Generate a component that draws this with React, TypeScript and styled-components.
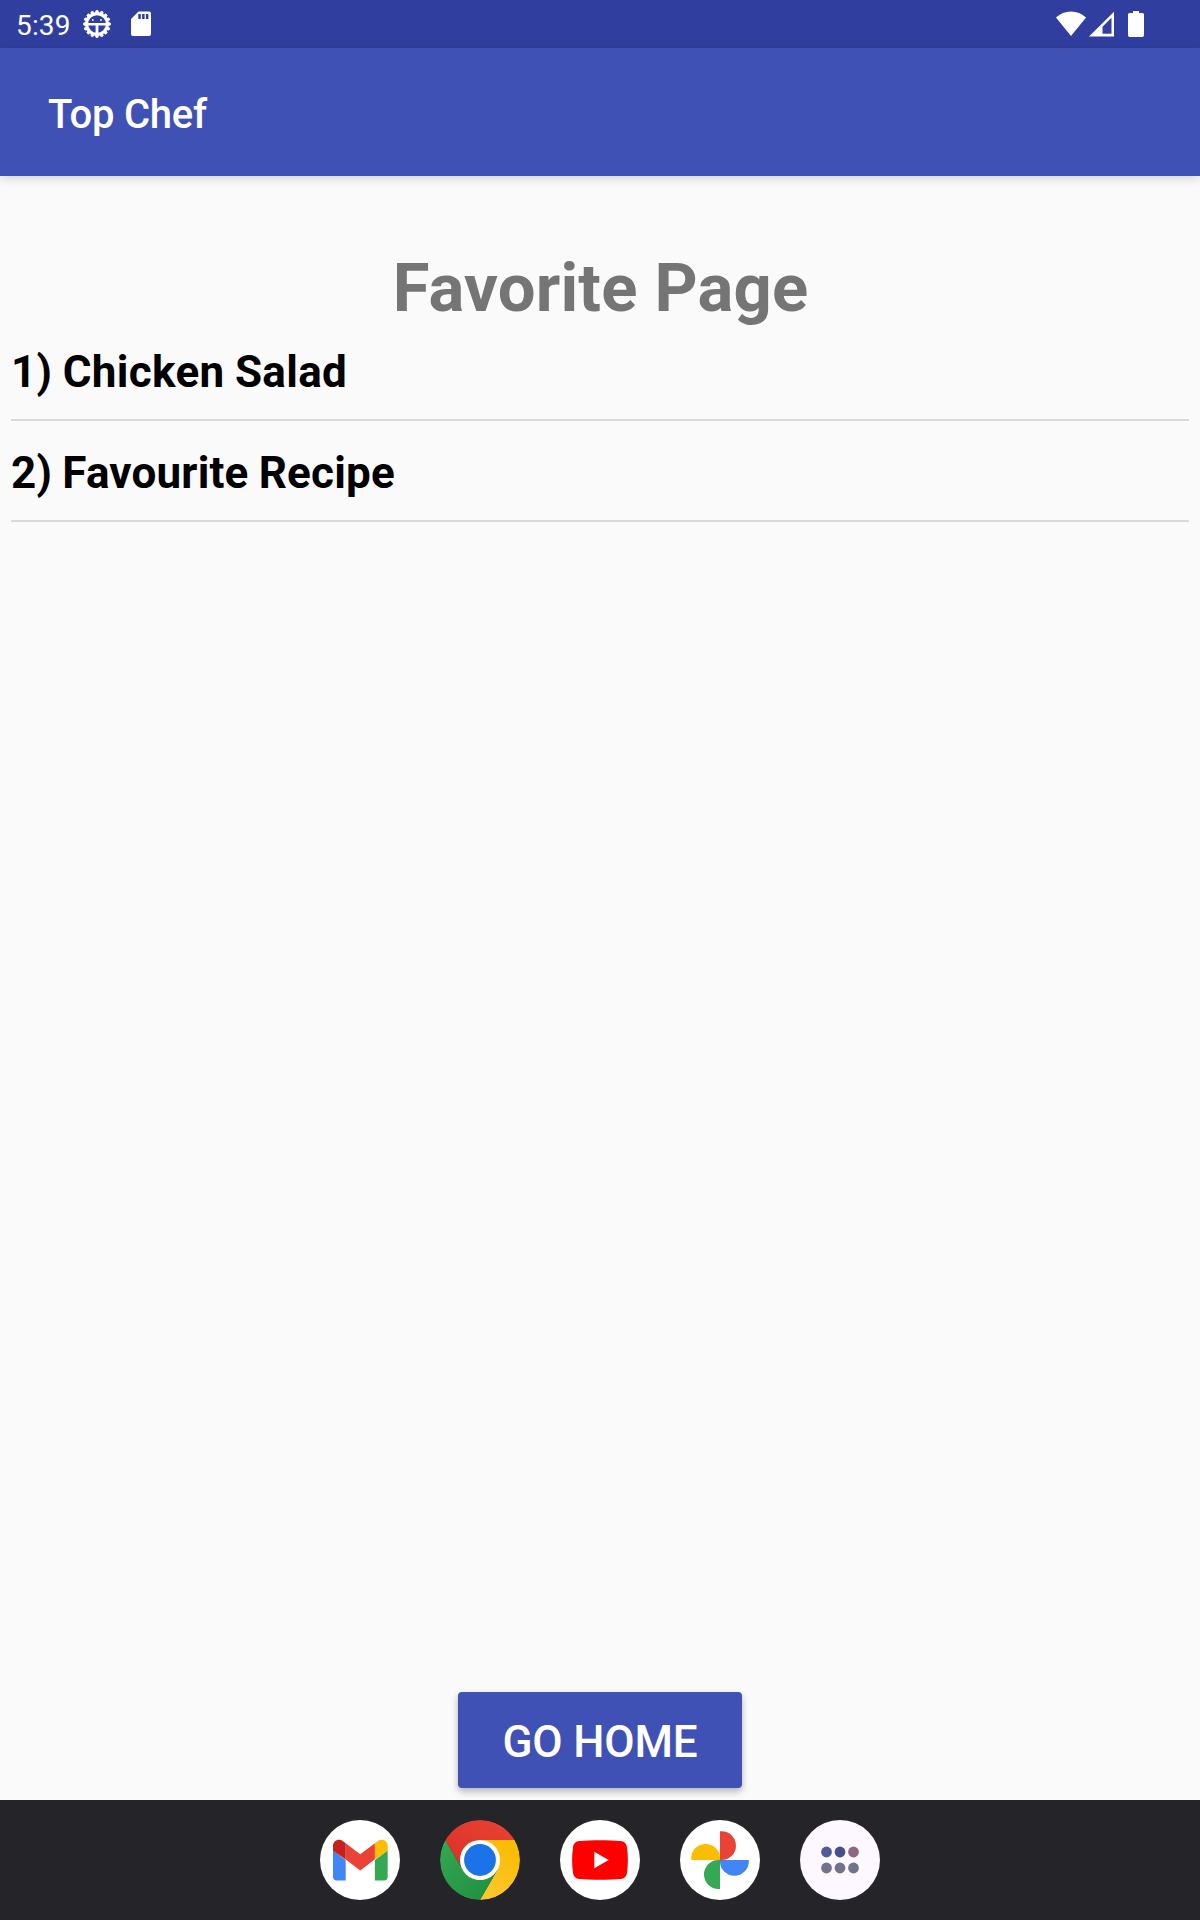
import React from "react";
import styled, { createGlobalStyle } from "styled-components";

const GlobalStyle = createGlobalStyle`
  * { box-sizing: border-box; }
  body {
    margin: 0;
    background: #fafafa;
    font-family: Roboto, "Liberation Sans", sans-serif;
  }
`;

const Screen = styled.div`
  display: flex;
  flex-direction: column;
  width: 1200px;
  height: 1920px;
  overflow: hidden;
  background: #fafafa;
`;

const StatusBar = styled.div`
  display: flex;
  justify-content: space-between;
  flex: none;
  height: 48px;
  padding: 0 50px 0 16px;
  background: #303f9f;
  color: #fff;
`;

const StatusGroup = styled.div<{ $gap?: number }>`
  display: flex;
  align-items: center;
  gap: ${(p) => p.$gap ?? 0}px;
`;

const Clock = styled.span`
  width: 67px;
  padding-top: 3px;
  font-size: 28px;
  letter-spacing: 0.15px;
  line-height: 45px;
`;

const BatterySlot = styled.div`
  padding: 0 6px 0 14.5px;
`;

const Glyph = styled.svg`
  display: block;
  flex: none;
`;

const AppBar = styled.header`
  display: flex;
  align-items: center;
  flex: none;
  height: 128px;
  padding: 6px 48px 0;
  background: #3f51b5;
  box-shadow: 0 2px 10px rgba(0, 0, 0, 0.17);
`;

const AppTitle = styled.h1`
  margin: 0;
  color: #fff;
  font-size: 40px;
  font-weight: 500;
  letter-spacing: -0.22px;
  line-height: 48px;
`;

const Content = styled.main`
  display: flex;
  flex-direction: column;
  flex: 1;
  min-height: 0;
  padding: 73px 11px 12px;
`;

const PageTitle = styled.h2`
  margin: 0;
  padding-left: 1px;
  color: #757575;
  font-size: 67px;
  font-weight: 700;
  letter-spacing: 0.18px;
  line-height: 79px;
  text-align: center;
`;

const RecipeList = styled.ul`
  flex: 1;
  margin: 0;
  padding: 0;
  list-style: none;
`;

const RecipeItem = styled.li<{ $first?: boolean }>`
  height: ${(p) => (p.$first ? 93 : 101)}px;
  padding-top: ${(p) => (p.$first ? 18 : 26)}px;
  border-bottom: 2px solid #dadada;
  color: #000;
  font-size: 44px;
  font-weight: 700;
  letter-spacing: ${(p) => (p.$first ? 0.33 : 0.19)}px;
  word-spacing: -0.9px;
  line-height: 52px;
`;

const HomeButton = styled.button`
  align-self: center;
  width: 284px;
  height: 96px;
  padding: 4px 0 0;
  border: 0;
  border-radius: 4px;
  background: #3f51b5;
  box-shadow: 0 4px 7px rgba(0, 0, 0, 0.24), 0 1px 6px rgba(0, 0, 0, 0.06);
  color: #fff;
  font-family: inherit;
  font-size: 44px;
  font-weight: 500;
  letter-spacing: -0.15px;
  line-height: 52px;
`;

const Taskbar = styled.nav`
  display: flex;
  align-items: center;
  justify-content: center;
  gap: 40px;
  flex: none;
  height: 120px;
  background: #252529;
`;

const AppIcon = styled.div<{ $bg?: string }>`
  display: flex;
  width: 80px;
  height: 80px;
  border-radius: 50%;
  overflow: hidden;
  background: ${(p) => p.$bg ?? "#fff"};
`;

const teeth = Array.from({ length: 16 }, (_, i) => i * 22.5);

function GearIcon() {
  return (
    <Glyph width="28" height="28" viewBox="0 0 28 28">
      <circle cx="14" cy="14" r="10.3" fill="none" stroke="#fff" strokeWidth="2.900" />
      {teeth.map((a) => (
        <path key={a} d="M12.300 3.200 13 .6h2l.7 2.600z" fill="#fff" stroke="#fff" strokeWidth=".8" strokeLinejoin="round" transform={`rotate(${a} 14 14)`} />
      ))}
      <path d="M4 13h20v2.400H15.400V24h-2.800v-8.600H4z" fill="#fff" />
      <circle cx="9.800" cy="10" r=".9" fill="#fff" />
      <circle cx="18" cy="10" r=".9" fill="#fff" />
    </Glyph>
  );
}

function SdCardIcon() {
  return (
    <Glyph width="20" height="26" viewBox="0 0 20 26">
      <path fillRule="evenodd" fill="#fff" d="M7.5.5H18a2 2 0 0 1 2 2V23a2 2 0 0 1-2 2H2a2 2 0 0 1-2-2V8zM7.3 3v5h2.5V3zm3.8 0v5h2.5V3zm3.8 0v5h2.5V3z" />
    </Glyph>
  );
}

function WifiIcon() {
  return (
    <Glyph width="30" height="26" viewBox="0 0 30 26">
      <path d="M15 25 0 6.5C4 2.5 9.500 .5 15 .5s11 2 15 6z" fill="#fff" />
    </Glyph>
  );
}

function SignalIcon() {
  return (
    <Glyph width="25" height="26" viewBox="0 0 25 26">
      <path fillRule="evenodd" d="M0 25.500 25 .7V25.500zM13.500 15.700V22.800H22.500V6.800z" fill="#fff" />
    </Glyph>
  );
}

function BatteryIcon() {
  return (
    <Glyph width="16" height="26" viewBox="0 0 16 26">
      <path d="M5 0h6v2h3.500A1.500 1.500 0 0 1 16 3.500v20.800a1.700 1.700 0 0 1-1.700 1.700H1.700A1.700 1.700 0 0 1 0 24.300v-20.800A1.500 1.500 0 0 1 1.500 2H5z" fill="#fff" />
    </Glyph>
  );
}

function GmailIcon() {
  return (
    <Glyph width="80" height="80" viewBox="0.300 0 80 80">
      <path d="M13.300 30.500 26 40v20.500h-9a3.700 3.700 0 0 1-3.700-3.700z" fill="#4285f4" />
      <path d="M55.200 40 68 30.500v26.300a3.700 3.700 0 0 1-3.700 3.700h-9.100z" fill="#34a853" />
      <path d="M26 23.300 40.600 34.300 55.200 23.300V39.200L40.600 50.400 26 39.400z" fill="#ea4335" />
      <path d="M13.300 30.800V26c0-5.500 5.800-8.100 10-4.800l2.700 2.100v16.100z" fill="#c5221f" />
      <path d="M55.200 39.400V23.300l2.800-2.100c4.200-3.300 10-.7 10 4.800v4.800z" fill="#fbbc04" />
    </Glyph>
  );
}

function ChromeIcon() {
  return (
    <Glyph width="80" height="80" viewBox="0 0 80 80">
      <defs>
        <linearGradient id="chromeRed" x1="0" y1="1" x2="1" y2="0">
          <stop offset="0" stopColor="#d93025" />
          <stop offset="1" stopColor="#ea4335" />
        </linearGradient>
        <linearGradient id="chromeYellow" x1="0" y1="1" x2=".5" y2="0">
          <stop offset="0" stopColor="#fcc934" />
          <stop offset="1" stopColor="#fbbc04" />
        </linearGradient>
        <linearGradient id="chromeGreen" x1="1" y1="1" x2="0" y2="0">
          <stop offset="0" stopColor="#1e8e3e" />
          <stop offset="1" stopColor="#34a853" />
        </linearGradient>
      </defs>
      <path d="M40 20H74.640A40 40 0 0 0 5.360 20L22.680 50L40 40z" fill="url(#chromeRed)" />
      <path d="M57.320 50 40 80A40 40 0 0 0 74.640 20H40V40z" fill="url(#chromeYellow)" />
      <path d="M22.680 50 5.360 20A40 40 0 0 0 40 80L57.320 50 40 40z" fill="url(#chromeGreen)" />
      <circle cx="40" cy="40" r="20" fill="#fff" />
      <circle cx="40" cy="40" r="15.900" fill="#1a73e8" />
    </Glyph>
  );
}

function YouTubeIcon() {
  return (
    <Glyph width="80" height="80" viewBox="0 0 80 80">
      <path d="M40 20.300c7.500 0 15 .2 20.500.7 4 .4 6 2.500 6.500 6.500 1.200 8.300 1.200 16.700 0 25-.5 4-2.500 6.100-6.500 6.500-11 .9-30 .9-41 0-4-.4-6-2.500-6.500-6.500-1.200-8.300-1.200-16.700 0-25 .5-4 2.500-6.100 6.500-6.500 5.500-.5 13-.7 20.500-.7z" fill="#f00" />
      <path d="M34.300 31.800 48.700 40 34.300 48.200z" fill="#fff" />
    </Glyph>
  );
}

function PhotosIcon() {
  return (
    <Glyph width="80" height="80" viewBox="0 0 80 80">
      <path d="M40 11.300v28.700h1.600a14.350 14.350 0 0 0 0-28.700z" fill="#ea4335" />
      <path d="M68.800 40H40v1.400a14.400 14.400 0 0 0 28.800 0z" fill="#4285f4" />
      <path d="M40 69V40h-1.500a14.500 14.500 0 0 0 0 29z" fill="#34a853" />
      <path d="M11.200 40H40v-1.700a14.400 14.400 0 0 0-28.800 0z" fill="#fbbc04" />
    </Glyph>
  );
}

const dots = [
  { x: 26.5, y: 32, c: "#505c98" },
  { x: 40, y: 32, c: "#454f89" },
  { x: 53.5, y: 32, c: "#8f6783" },
  { x: 26.5, y: 48, c: "#70748b" },
  { x: 40, y: 48, c: "#70748b" },
  { x: 53.5, y: 48, c: "#70748b" },
];

function AllAppsIcon() {
  return (
    <Glyph width="80" height="80" viewBox="0 0 80 80">
      {dots.map((d) => (
        <circle key={`${d.x}-${d.y}`} cx={d.x} cy={d.y} r="5.400" fill={d.c} />
      ))}
    </Glyph>
  );
}

const recipes = ["Chicken Salad", "Favourite Recipe"];

export default function App() {
  return (
    <>
      <GlobalStyle />
      <Screen>
        <StatusBar>
          <StatusGroup>
            <Clock>5:39</Clock>
            <StatusGroup $gap={20}>
              <GearIcon />
              <SdCardIcon />
            </StatusGroup>
          </StatusGroup>
          <StatusGroup>
            <StatusGroup $gap={2.5}>
              <WifiIcon />
              <SignalIcon />
            </StatusGroup>
            <BatterySlot>
              <BatteryIcon />
            </BatterySlot>
          </StatusGroup>
        </StatusBar>
        <AppBar>
          <AppTitle>Top Chef</AppTitle>
        </AppBar>
        <Content>
          <PageTitle>Favorite Page</PageTitle>
          <RecipeList>
            {recipes.map((name, i) => (
              <RecipeItem key={name} $first={i === 0}>
                {i + 1}) {name}
              </RecipeItem>
            ))}
          </RecipeList>
          <HomeButton>GO HOME</HomeButton>
        </Content>
        <Taskbar>
          <AppIcon><GmailIcon /></AppIcon>
          <AppIcon $bg="transparent"><ChromeIcon /></AppIcon>
          <AppIcon><YouTubeIcon /></AppIcon>
          <AppIcon><PhotosIcon /></AppIcon>
          <AppIcon $bg="#fdf8ff"><AllAppsIcon /></AppIcon>
        </Taskbar>
      </Screen>
    </>
  );
}
